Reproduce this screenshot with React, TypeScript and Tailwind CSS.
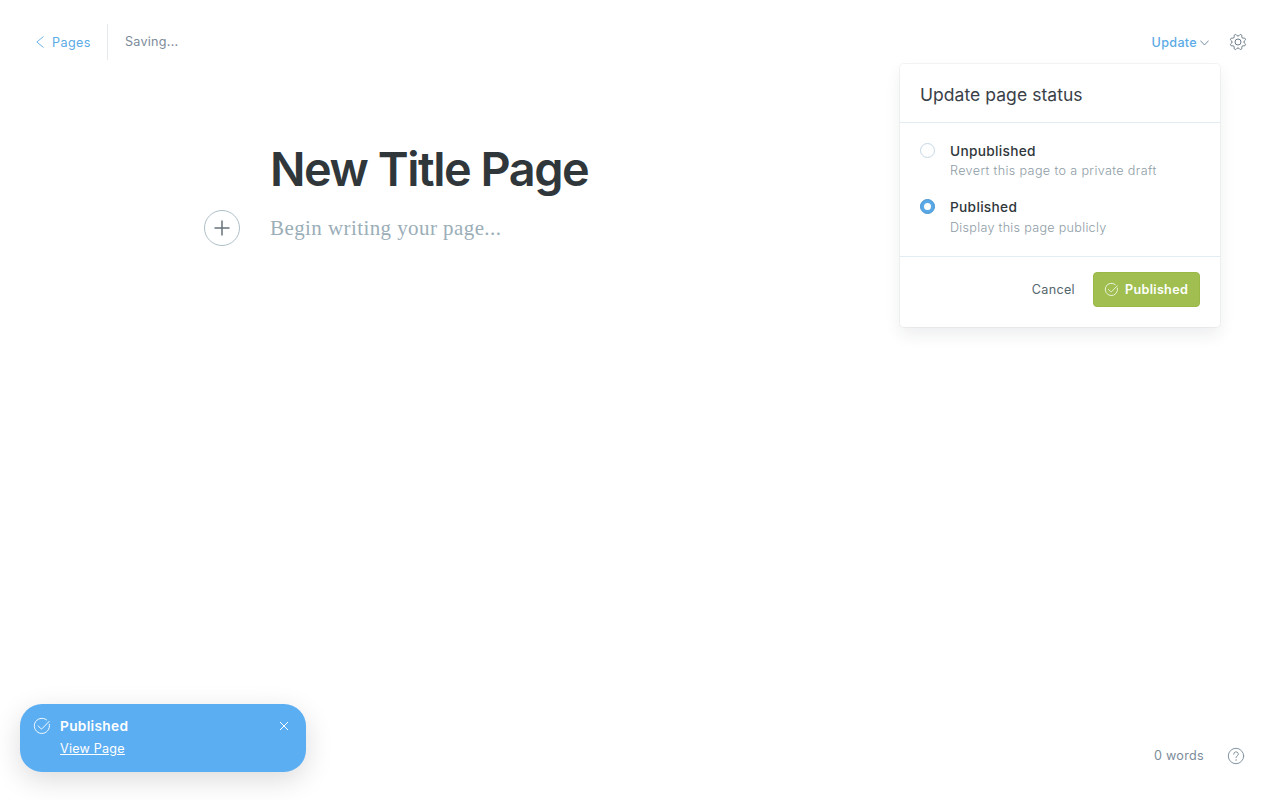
import React from "react";

function CheckCircle({ size }: { size: number }) {
  return (
    <svg width={size} height={size} viewBox="0 0 24 24" className="overflow-visible" fill="none" stroke="currentColor" strokeWidth="1.4" strokeLinecap="round" strokeLinejoin="round">
      <path d="M6.2 11.8l4.2 4.3a1.1 1.1 0 0 0 1.6 0L22.8 5" />
      <path d="M23 9.3A11.4 11.4 0 1 1 18.9 2.8" />
    </svg>
  );
}

function Gear() {
  return (
    <svg width="16" height="16" viewBox="0 0 24 24" className="overflow-visible" fill="none" stroke="currentColor" strokeWidth="1.5" strokeLinejoin="round">
      <circle cx="12" cy="12" r="4.5" />
      <path d="M10.546 2.438a1.957 1.957 0 0 0 2.908 0L14.4 1.4a1.959 1.959 0 0 1 3.41 1.413l-.071 1.4a1.958 1.958 0 0 0 2.051 2.054l1.4-.071a1.959 1.959 0 0 1 1.41 3.41l-1.042.94a1.96 1.96 0 0 0 0 2.909l1.042.94a1.959 1.959 0 0 1-1.413 3.41l-1.4-.071a1.958 1.958 0 0 0-2.056 2.056l.071 1.4A1.959 1.959 0 0 1 14.4 22.6l-.941-1.041a1.959 1.959 0 0 0-2.908 0L9.606 22.6A1.959 1.959 0 0 1 6.2 21.192l.072-1.4a1.958 1.958 0 0 0-2.056-2.056l-1.4.071A1.958 1.958 0 0 1 1.4 14.4l1.041-.94a1.96 1.96 0 0 0 0-2.909L1.4 9.606A1.958 1.958 0 0 1 2.813 6.2l1.4.071a1.958 1.958 0 0 0 2.056-2.06L6.2 2.81A1.959 1.959 0 0 1 9.606 1.4z" />
    </svg>
  );
}

function StatusMenu() {
  return (
    <div className="absolute left-[900px] top-16 h-[263px] w-80 rounded-[4px] bg-white shadow-[0_0_0_1px_rgba(99,114,130,0.07),0_8px_16px_rgba(27,39,51,0.08)]">
      <div className="flex h-[59px] items-center border-b border-[#e2ecf3] px-5 pt-1">
        <h2 className="text-[17.5px] leading-6 tracking-[0.05px] text-[#394047]">Update page status</h2>
      </div>
      <div className="flex h-[134px] flex-col gap-4 border-b border-[#e2ecf3] px-5 pt-[18px]">
        <label className="flex h-10 gap-[15px]">
          <span className="mt-[2px] size-[15px] rounded-full border border-[#c5d7e5]" />
          <span className="flex flex-col">
            <span className="text-[13.7px] font-medium leading-5 tracking-[0.3px] text-[#30373b]">Unpublished</span>
            <span className="text-[12.6px] font-light leading-5 tracking-[0.37px] text-[#8e9ca6]">Revert this page to a private draft</span>
          </span>
        </label>
        <label className="flex h-10 gap-[15px]">
          <span className="mt-[2px] flex size-[15px] items-center justify-center rounded-full border border-[#4594d2] bg-[#5aa9e6]">
            <span className="size-[7px] rounded-full bg-white" />
          </span>
          <span className="flex flex-col">
            <span className="text-[13.7px] font-medium leading-5 tracking-[0.3px] text-[#30373b]">Published</span>
            <span className="mt-px text-[12.6px] font-light leading-5 tracking-[0.29px] text-[#8e9ca6]">Display this page publicly</span>
          </span>
        </label>
      </div>
      <div className="flex items-center justify-end gap-[18px] px-5 pt-[15px]">
        <button className="mt-px text-[12.6px] leading-5 tracking-[0.33px] text-[#54666d]">Cancel</button>
        <button className="flex h-[35px] w-[107px] items-center gap-[7px] rounded-[4px] border border-[#9ab846] bg-[#a0bf50] pl-[11px] text-white">
          <CheckCircle size={13} />
          <span className="mt-px text-[12.6px] font-semibold leading-5 tracking-[0.32px]">Published</span>
        </button>
      </div>
    </div>
  );
}

function Toast() {
  return (
    <aside className="absolute left-5 top-[704px] flex h-[68px] w-[286px] rounded-[22px] bg-[#5caef2] pl-[14px] pt-3 text-white shadow-[0_8px_28px_rgba(0,0,0,0.14)]">
      <span className="mt-[2px]"><CheckCircle size={16} /></span>
      <div className="ml-[10px] w-[220px]">
        <p className="text-[13.7px] font-semibold leading-5 tracking-[0.32px]">Published</p>
        <a className="mt-[3px] block text-[12.6px] leading-5 tracking-[0.22px] underline">View Page</a>
      </div>
      <svg className="mt-[6px]" width="8" height="8" viewBox="0 0 8 8" fill="none" stroke="white" strokeWidth="1">
        <path d="M0 0l8 8M8 0L0 8" />
      </svg>
    </aside>
  );
}

export default function App() {
  return (
    <div className="relative flex h-[800px] w-[1280px] flex-col overflow-hidden bg-white font-['Inter',sans-serif]">
      <header className="flex h-[84px] items-center pl-9 pr-[34px]">
        <a className="flex items-center gap-2 text-[#5cabe6]">
          <svg width="8" height="12" viewBox="0 0 8 12" fill="none" stroke="currentColor" strokeWidth="0.9">
            <path d="M7.5 0.5L0.8 6l6.7 5.5" />
          </svg>
          <span className="mt-0.5 w-[39px] whitespace-nowrap text-[12.6px] leading-5 tracking-[0.4px]">Pages</span>
        </a>
        <span className="ml-4 h-9 w-px bg-[#e5e9ed]" />
        <span className="-mt-px ml-[17px] text-[12.6px] leading-5 tracking-[0.25px] text-[#7c8b9a]">Saving...</span>
        <button className="ml-auto flex items-center gap-[3px] text-[#5cabe6]">
          <span className="mt-0.5 text-[12.6px] font-medium leading-5 tracking-[0.3px]">Update</span>
          <svg className="mt-0.5" width="9" height="6" viewBox="0 0 9 6" fill="none" stroke="#66809a" strokeWidth="0.9">
            <path d="M0.4 0.6L4.5 5 8.6 0.6" />
          </svg>
        </button>
        <button className="ml-[21px] text-[#6e7d89]"><Gear /></button>
      </header>
      <main className="flex flex-1 flex-col pl-[204px] pt-[57px]">
        <h1 className="ml-[66px] h-14 text-[46.8px] font-semibold leading-[56px] tracking-[-1.45px] text-[#30373b]">New Title Page</h1>
        <div className="mt-[13px] flex items-center gap-[30px]">
          <button className="flex size-9 items-center justify-center rounded-full border border-[#aebfc8]">
            <svg width="16" height="16" viewBox="0 0 16 16" stroke="#66737b" strokeWidth="1.5">
              <path d="M8 0.5v15M0.5 8h15" />
            </svg>
          </button>
          <p className="font-['Liberation_Serif',serif] text-[21px] leading-8 tracking-[0.42px] text-[#9baeb8]">Begin writing your page...</p>
        </div>
      </main>
      <footer className="flex h-[88px] items-center justify-end gap-6 pr-9">
        <span className="-mt-px text-[12.6px] leading-5 tracking-[0.3px] text-[#7c8b9a]">0 words</span>
        <svg width="16" height="16" viewBox="0 0 16 16" className="overflow-visible text-[#8495a0]" fill="none" stroke="currentColor" strokeLinecap="round">
          <circle cx="8" cy="8" r="7.7" />
          <path d="M5.7 6.2a2.3 2.3 0 1 1 3.3 2c-.7.3-1 .7-1 1.4" />
          <circle cx="8" cy="12" r="0.35" strokeWidth="0.5" fill="currentColor" />
        </svg>
      </footer>
      <StatusMenu />
      <Toast />
    </div>
  );
}
